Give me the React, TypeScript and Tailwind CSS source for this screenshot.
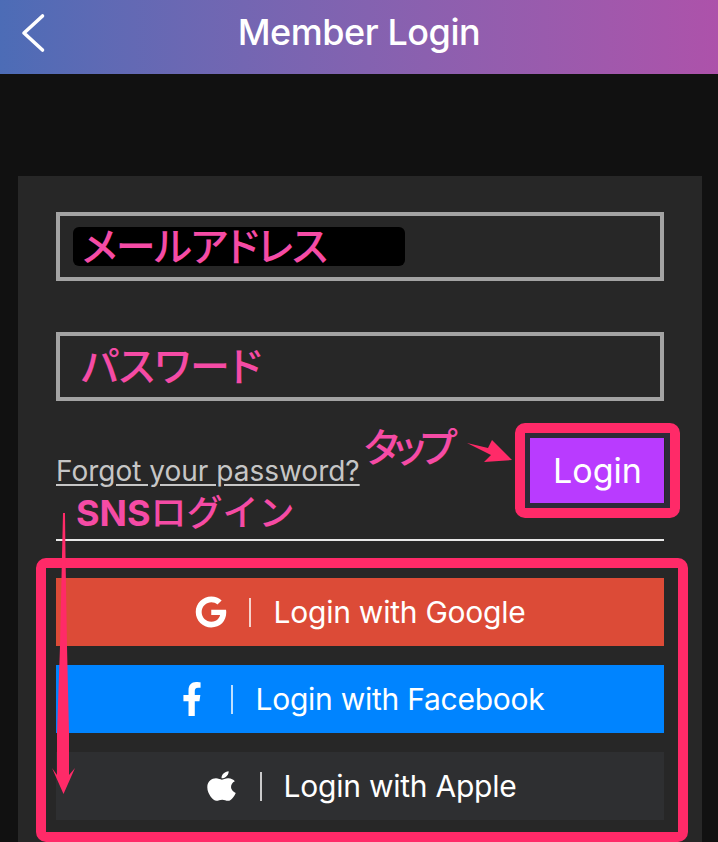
import React from "react";

const pink = "text-[#f54ba5]";

function Social({ bg, label, icon, gap }: { bg: string; label: string; icon: React.ReactNode; gap: string }) {
  return (
    <div className={`h-[68px] flex items-center justify-center text-white text-[30px] ${bg}`}>
      {icon}
      <div className={`w-[2px] h-[29px] bg-white/75 ${gap}`} />
      <span className="tracking-[-0.25px]">{label}</span>
    </div>
  );
}

export default function App() {
  return (
    <div className="relative w-[718px] h-[842px] overflow-hidden bg-[#111111] font-['Inter','Noto_Sans_CJK_JP',sans-serif]">
      <header className="relative h-[74px] flex items-center justify-center bg-gradient-to-r from-[#4c6cb6] to-[#ad52aa]">
        <svg className="absolute left-[20px] top-[13px]" width="26" height="40" viewBox="0 0 26 40" fill="none">
          <path d="M22.5 3 L4 20 L22.5 37" stroke="white" strokeWidth="3.6" strokeLinecap="round" strokeLinejoin="round" />
        </svg>
        <h1 className="text-white text-[36px] font-medium -mt-[10px] tracking-[-0.45px]">Member Login</h1>
      </header>

      <main className="relative mt-[102px] ml-[18px] w-[684px] h-[700px] bg-[#272727] pt-[36px] px-[38px]">
        <div className="h-[69px] border-[4px] border-[#a3a3a3] flex items-center pl-[13px]">
          <div className={`w-[332px] h-[39px] rounded-[6px] bg-black pl-[9px] flex items-center text-[40px] font-medium tracking-[-1px] leading-none [font-feature-settings:'palt'] ${pink}`}>
            メールアドレス
          </div>
        </div>

        <div className={`mt-[51px] h-[69px] border-[4px] border-[#a3a3a3] flex items-center pl-[21px] text-[40px] font-medium leading-none [font-feature-settings:'palt'] ${pink}`}>
          パスワード
        </div>

        <div className="mt-[36px] h-[104px] border-b-2 border-[#e8e8e8] flex items-start justify-between">
          <a className="mt-[17px] text-[#c6c6c6] text-[28px] leading-[34px] underline underline-offset-[3px]">
            Forgot your password?
          </a>
          <button className="w-[135px] h-[66px] pl-[2px] bg-[#b93bff] text-white text-[34px] flex items-center justify-center">
            Login
          </button>
        </div>

        <div className="mt-[37px] flex flex-col gap-[19px]">
          <Social
            bg="bg-[#dc4b37]"
            label="Login with Google"
            gap="ml-[22px] mr-[23px]"
            icon={
              <svg width="32" height="32" viewBox="0 0 488 512" fill="white">
                <path d="M488 261.8C488 403.3 391.1 504 248 504 110.8 504 0 393.2 0 256S110.8 8 248 8c66.8 0 123 24.5 166.3 64.9l-67.5 64.9C258.5 52.6 94.3 116.6 94.3 256c0 86.5 69.1 156.6 153.7 156.6 98.2 0 135-70.4 140.8-106.9H248v-85.3h236.1c2.3 12.7 3.9 24.9 3.9 41.4z" />
              </svg>
            }
          />
          <Social
            bg="bg-[#0084ff] pl-[7px]"
            label="Login with Facebook"
            gap="ml-[29px] mr-[22px]"
            icon={
              <svg width="20" height="34" viewBox="0 0 320 512" fill="white" preserveAspectRatio="none">
                <path d="M279.14 288l14.22-92.66h-88.91v-60.13c0-25.35 12.42-50.06 52.24-50.06h40.42V6.26S260.43 0 225.36 0c-73.22 0-121.08 44.38-121.08 124.72v70.62H22.89V288h81.39v224h100.17V288z" />
              </svg>
            }
          />
          <Social
            bg="bg-[#2e2f31] pl-[3px]"
            label="Login with Apple"
            gap="ml-[24px] mr-[22px]"
            icon={
              <svg width="29" height="34" viewBox="0 0 384 512" fill="white" preserveAspectRatio="none">
                <path d="M318.7 268.7c-.2-36.7 16.4-64.4 50-84.8-18.8-26.9-47.2-41.7-84.7-44.6-35.5-2.8-74.3 20.7-88.5 20.7-15 0-49.4-19.7-76.4-19.7C63.3 141.2 4 184.8 4 273.5q0 39.3 14.4 81.2c12.8 36.7 59 126.7 107.2 125.2 25.2-.6 43-17.9 75.8-17.9 31.8 0 48.3 17.9 76.4 17.9 48.6-.7 90.4-82.5 102.6-119.3-65.2-30.7-61.7-90-61.7-91.9zm-56.6-164.2c27.3-32.4 24.8-61.9 24-72.5-24.1 1.4-52 16.4-67.9 34.9-17.5 19.8-27.8 44.3-25.6 71.9 26.1 2 49.9-11.4 69.5-34.3z" />
              </svg>
            }
          />
        </div>
      </main>

      {/* Annotations drawn on top of the screenshot */}
      <div className="absolute left-[515px] top-[423px] w-[165px] h-[95px] rounded-[10px] border-[10px] border-[#ff2a68]" />
      <div className="absolute left-[525px] top-[433px] w-[145px] h-[75px] border-[5px] border-[#2e2a38]" />
      <div className="absolute left-[36px] top-[558px] w-[652px] h-[284px] rounded-[10px] border-[10px] border-[#ff2a68]" />

      <div className={`absolute left-[364px] top-[423px] text-[40px] font-medium tracking-[-5px] leading-[50px] [font-feature-settings:'palt'] ${pink}`}>タップ</div>
      <div className={`absolute left-[76px] top-[489px] text-[36px] leading-[48px] font-bold ${pink}`}>
        SNS<span className="font-medium">ログイン</span>
      </div>

      <svg className="absolute left-[460px] top-[435px]" width="60" height="36" viewBox="0 0 60 36">
        <polygon points="7,8 28,13 32,5 52,25 24,27 31,20" fill="#ff2a68" />
      </svg>

      <svg className="absolute left-[50px] top-[510px]" width="30" height="290" viewBox="0 0 30 290">
        <polygon points="13,3 15,3 15.5,45 17,136 19,223 19,265 25,258 13.5,284 2,258 7,265 7,223 10,136 12,45" fill="#ff2a68" />
      </svg>
    </div>
  );
}
